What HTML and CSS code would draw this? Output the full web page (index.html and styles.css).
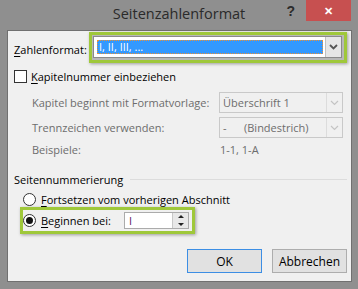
FILE: index.html
```html
<!DOCTYPE html>
<html lang="de">
<head>
    <meta charset="UTF-8">
    <title>Seitenzahlenformat</title>
    <link rel="stylesheet" href="styles.css">
</head>
<body>
    <div class="window">
        <div class="titlebar">
            <div></div>
            <div class="title">Seitenzahlenformat</div>
            <div class="controls">
                <span class="help">?</span>
                <span class="close">&#x2715;</span>
            </div>
        </div>

        <div class="client">
            <div class="row-format">
                <label class="label-format"><u>Z</u>ahlenformat:</label>
                <div class="mark mark-format">
                    <div class="combo">
                        <div class="combo-value"><span class="selected">I, II, III, ...</span></div>
                        <div class="combo-btn">
                            <svg width="9" height="6" viewBox="0 0 9 6"><path d="M1 1 L4.5 4.5 L8 1" fill="none" stroke="#555" stroke-width="1.8"/></svg>
                        </div>
                    </div>
                </div>
            </div>

            <div class="row-check">
                <span class="checkbox"></span>
                <span><u>K</u>apitelnummer einbeziehen</span>
            </div>

            <div class="row-sub first">
                <span class="sub-label">Kapitel beginnt mit Formatvorlage:</span>
                <div class="select">
                    <span class="select-value">Überschrift 1</span>
                    <span class="select-btn">
                        <svg width="9" height="6" viewBox="0 0 9 6"><path d="M1 1 L4.5 4.5 L8 1" fill="none" stroke="#c4c4c4" stroke-width="1.2"/></svg>
                    </span>
                </div>
            </div>

            <div class="row-sub">
                <span class="sub-label">Trennzeichen verwenden:</span>
                <div class="select">
                    <span class="select-value"><span class="dash">-</span>(Bindestrich)</span>
                    <span class="select-btn">
                        <svg width="9" height="6" viewBox="0 0 9 6"><path d="M1 1 L4.5 4.5 L8 1" fill="none" stroke="#c4c4c4" stroke-width="1.2"/></svg>
                    </span>
                </div>
            </div>

            <div class="row-example">
                <span class="sub-label">Beispiele:</span>
                <span class="example-value">1-1, 1-A</span>
            </div>

            <div class="group-head">
                <span>Seitennummerierung</span>
                <span class="group-line"></span>
            </div>

            <div class="row-radio">
                <span class="radio"></span>
                <span><u>F</u>ortsetzen vom vorherigen Abschnitt</span>
            </div>

            <div class="mark mark-start">
                <span class="radio checked"></span>
                <span class="start-label"><u>B</u>eginnen bei:</span>
                <div class="spin">
                    <span class="spin-value">I</span>
                    <span class="spin-btns">
                        <span class="spin-up"></span>
                        <span class="spin-down"></span>
                    </span>
                </div>
            </div>

            <div class="buttons">
                <button class="btn btn-default">OK</button>
                <button class="btn">Abbrechen</button>
            </div>
        </div>
    </div>
</body>
</html>
```

FILE: styles.css
```css
body {
    margin: 0;
    background: #8f8f8f;
    font-family: 'Segoe UI', 'Open Sans', 'Liberation Sans', sans-serif;
    font-size: 11px;
    color: #000;
}
.window {
    width: 358px;
    height: 289px;
    display: flex;
    flex-direction: column;
}
.titlebar {
    height: 30px;
    display: grid;
    grid-template-columns: 1fr auto 1fr;
}
.title {
    font-size: 14.5px;
    color: #2a2a2a;
    line-height: 28px;
    white-space: nowrap;
}
.controls {
    display: flex;
    justify-content: flex-end;
    align-items: flex-start;
    padding-right: 7px;
}
.help {
    font-weight: bold;
    font-size: 14px;
    color: #2b2b2b;
    margin: 3px 11px 0 0;
    font-family: 'Liberation Sans', sans-serif;
}
.close {
    width: 45px;
    height: 21px;
    background: #c75050;
    color: #fff;
    font-size: 11px;
    font-weight: bold;
    display: flex;
    align-items: center;
    justify-content: center;
}
.client {
    flex: 1;
    margin: 0 6px 7px 7px;
    border: 1px solid #707070;
    background: #f0f0f0;
    padding: 1px 4px 0 6px;
    display: flex;
    flex-direction: column;
    white-space: nowrap;
}
u {
    text-decoration: underline;
    text-underline-offset: 2px;
}

/* green highlight */
.mark {
    border: 3px solid #9fc83a;
    box-shadow: 1px 1px 3px rgba(0, 0, 0, 0.35);
    box-sizing: border-box;
    flex-shrink: 0;
}

.row-format {
    display: flex;
    align-items: center;
    height: 31px;
}
.label-format {
    width: 75px;
    flex-shrink: 0;
    margin-top: 3px;
}
.mark-format {
    width: 258px;
    height: 31px;
    padding: 1px 2px 2px 1px;
    background: #b8b8b8;
}
.combo {
    height: 100%;
    display: flex;
    border: 1px solid #8a8a8a;
    background: #fff;
    box-sizing: border-box;
}
.combo-value {
    flex: 1;
    padding: 3px 2px 3px 3px;
    display: flex;
}
.selected {
    flex: 1;
    background: #3399ff;
    color: #fff;
    outline: 1px dotted #f09030;
    outline-offset: -1px;
    padding-left: 2px;
    line-height: 14px;
}
.combo-btn {
    width: 15px;
    background: #e6e6e6;
    border-left: 1px solid #c0c0c0;
    display: flex;
    align-items: center;
    justify-content: center;
}

.row-check {
    display: flex;
    align-items: center;
    height: 24px;
    margin-top: 1px;
}
.checkbox {
    width: 11px;
    height: 11px;
    border: 1px solid #333;
    background: #fff;
    margin-right: 4px;
}

.row-sub {
    display: flex;
    align-items: center;
    height: 21px;
    margin-top: 4px;
    padding-left: 18px;
    color: #6d6d6d;
}
.sub-label {
    width: 187px;
    flex-shrink: 0;
}
.select {
    width: 124px;
    height: 21px;
    box-sizing: border-box;
    border: 1px solid #c9c9c9;
    display: flex;
}
.select-value {
    flex: 1;
    padding-left: 3px;
    line-height: 19px;
}
.dash {
    display: inline-block;
    width: 21px;
}
.select-btn {
    width: 15px;
    border-left: 1px solid #dcdcdc;
    display: flex;
    align-items: center;
    justify-content: center;
}

.row-example {
    display: flex;
    align-items: center;
    height: 18px;
    margin-top: 2px;
    padding-left: 18px;
    color: #6d6d6d;
}
.example-value {
    padding-left: 1px;
}

.group-head {
    display: flex;
    align-items: center;
    height: 18px;
    margin-top: 12px;
}
.group-line {
    flex: 1;
    height: 1px;
    background: #dcdcdc;
    margin: 1px 0 0 7px;
}

.row-radio {
    display: flex;
    align-items: center;
    height: 18px;
    margin-top: 2px;
    padding-left: 9px;
}
.radio {
    width: 11px;
    height: 11px;
    border: 1px solid #333;
    border-radius: 50%;
    background: #fff;
    margin-right: 5px;
    display: flex;
    align-items: center;
    justify-content: center;
    flex-shrink: 0;
}
.radio.checked::after {
    content: "";
    width: 7px;
    height: 7px;
    border-radius: 50%;
    background: #111;
}

.mark-start {
    width: 175px;
    height: 27px;
    margin: -1px 0 0 6px;
    display: flex;
    align-items: center;
}
.start-label {
    width: 83px;
    flex-shrink: 0;
}
.spin {
    width: 65px;
    height: 17px;
    box-sizing: border-box;
    border: 1px solid #ababab;
    background: #fff;
    display: flex;
}
.spin-value {
    flex: 1;
    color: #5c1a63;
    padding-left: 4px;
    line-height: 15px;
}
.spin-btns {
    width: 15px;
    border-left: 1px solid #c8c8c8;
    background: #e8e8e8;
    display: flex;
    flex-direction: column;
    align-items: center;
    justify-content: space-around;
}
.spin-up, .spin-down {
    width: 0;
    height: 0;
    border-left: 3px solid transparent;
    border-right: 3px solid transparent;
}
.spin-up {
    border-bottom: 3px solid #222;
}
.spin-down {
    border-top: 3px solid #222;
}

.buttons {
    display: flex;
    justify-content: flex-end;
    gap: 10px;
    margin-top: 15px;
}
.btn {
    width: 75px;
    height: 24px;
    background: #e1e1e1;
    border: 1px solid #adadad;
    font-family: inherit;
    font-size: 12px;
    color: #000;
    padding: 0;
}
.btn-default {
    border-color: #3c8ee4;
}
```
